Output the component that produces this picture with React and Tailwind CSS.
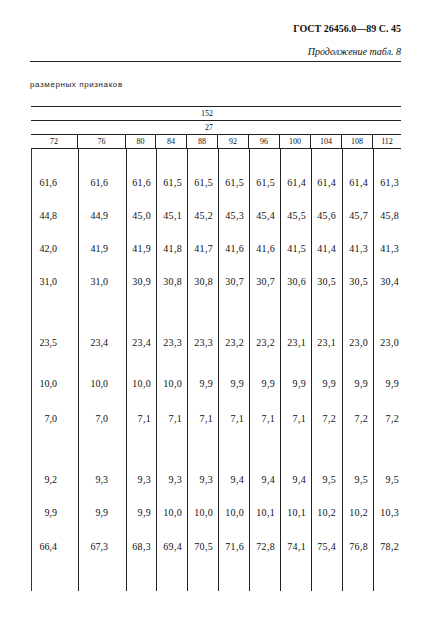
const cols = 'grid grid-cols-[47px_48px_30px_31px_31px_31px_31px_31px_31px_31px_28px]';

const heads = ['72', '76', '80', '84', '88', '92', '96', '100', '104', '108', '112'];

// right padding per column so numbers sit where the scan puts them
const pads = ['pr-[21px]', 'pr-[18px]', 'pr-[5px]', 'pr-[5px]', 'pr-[5px]', 'pr-[5px]', 'pr-[5px]', 'pr-[5px]', 'pr-[6px]', 'pr-[5px]', 'pr-[3px]'];

const rows = [
  { h: 'h-[17px]' },
  { h: 'h-[33px]', v: ['61,6', '61,6', '61,6', '61,5', '61,5', '61,5', '61,5', '61,4', '61,4', '61,4', '61,3'] },
  { h: 'h-[33px]', v: ['44,8', '44,9', '45,0', '45,1', '45,2', '45,3', '45,4', '45,5', '45,6', '45,7', '45,8'] },
  { h: 'h-[33px]', v: ['42,0', '41,9', '41,9', '41,8', '41,7', '41,6', '41,6', '41,5', '41,4', '41,3', '41,3'] },
  { h: 'h-[33px]', v: ['31,0', '31,0', '30,9', '30,8', '30,8', '30,7', '30,7', '30,6', '30,5', '30,5', '30,4'] },
  { h: 'h-[28px]' },
  { h: 'h-[33px]', v: ['23,5', '23,4', '23,4', '23,3', '23,3', '23,2', '23,2', '23,1', '23,1', '23,0', '23,0'] },
  { h: 'h-[8px]' },
  { h: 'h-[34px]', v: ['10,0', '10,0', '10,0', '10,0', '9,9', '9,9', '9,9', '9,9', '9,9', '9,9', '9,9'] },
  { h: 'h-[36px]', v: ['7,0', '7,0', '7,1', '7,1', '7,1', '7,1', '7,1', '7,1', '7,2', '7,2', '7,2'] },
  { h: 'h-[26px]' },
  { h: 'h-[34px]', v: ['9,2', '9,3', '9,3', '9,3', '9,3', '9,4', '9,4', '9,4', '9,5', '9,5', '9,5'] },
  { h: 'h-[32px]', v: ['9,9', '9,9', '9,9', '10,0', '10,0', '10,0', '10,1', '10,1', '10,2', '10,2', '10,3'] },
  { h: 'h-[36px]', v: ['66,4', '67,3', '68,3', '69,4', '70,5', '71,6', '72,8', '74,1', '75,4', '76,8', '78,2'] },
  { h: 'h-[26px]' },
];

export default function App() {
  return (
    <div className="w-[427px] h-[632px] bg-white text-[#111] font-['Liberation_Serif',serif] overflow-hidden">
      <div className="pl-[30px] pr-[26px]">
        {/* page header */}
        <div className="pt-[23px] text-right text-[10px] font-bold leading-[12px]">
          ГОСТ 26456.0—89 С. 45
        </div>
        <div className="mt-[11px] text-right italic text-[10px] leading-[12px]">
          Продолжение табл. 8
        </div>
        <div className="mt-[3px] border-t-[1.5px] border-[#222]"></div>

        <div className="mt-[18px] text-[8px] leading-[10px] tracking-[0.6px] font-['Liberation_Sans',sans-serif] text-[#222]">
          размерных признаков
        </div>

        {/* table */}
        <div className="mt-[16px] ml-[1px] border-t-[1.5px] border-[#222]">
          <div className="h-[14px] border-b-[1.5px] border-[#222] flex items-center justify-center pr-[18px] text-[8px] leading-none">
            152
          </div>
          <div className="h-[14px] border-b-[1.5px] border-[#222] flex items-center justify-center pr-[14px] text-[8px] leading-none">
            27
          </div>
          <div className={`${cols} h-[14px] border-b-[1.5px] border-[#222] text-[8px] leading-none`}>
            {heads.map((h, i) => (
              <div
                key={h}
                className={`flex items-center justify-center ${i < heads.length - 1 ? 'border-r border-[#222]' : ''}`}
              >
                {h}
              </div>
            ))}
          </div>

          {/* body */}
          <div className="border-l border-[#333]">
            {rows.map((r, ri) => (
              <div key={ri} className={`${cols} ${r.h}`}>
                {heads.map((_, ci) => (
                  <div
                    key={ci}
                    className={`flex items-center justify-end text-[10px] leading-none ${ci > 1 ? 'tracking-[0.3px]' : ''} ${pads[ci]} ${ci < heads.length - 1 ? 'border-r border-[#222]' : ''}`}
                  >
                    {r.v ? r.v[ci] : ''}
                  </div>
                ))}
              </div>
            ))}
          </div>
        </div>
      </div>
    </div>
  );
}
